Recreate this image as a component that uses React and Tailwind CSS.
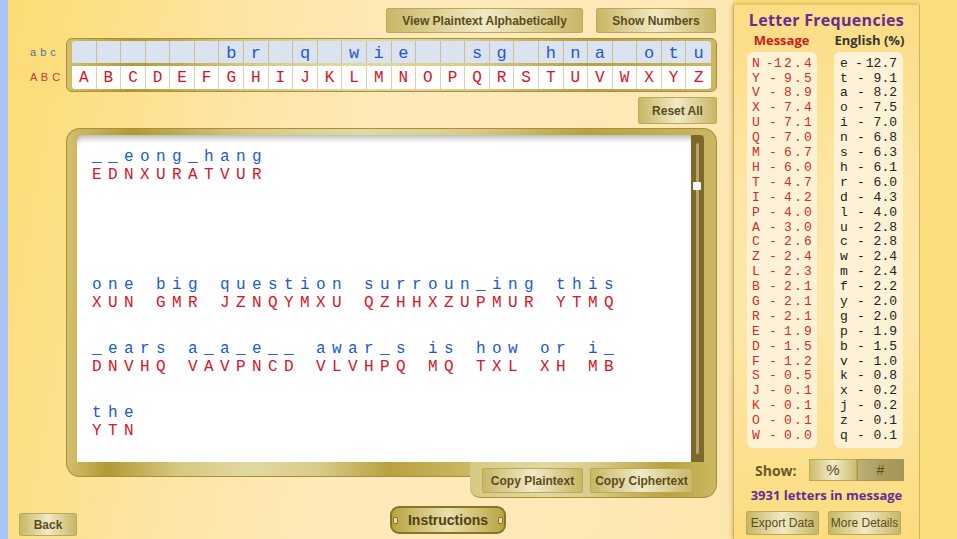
const KEY = { G: 'b', H: 'r', J: 'q', L: 'w', M: 'i', N: 'e', Q: 's', R: 'g', T: 'h', U: 'n', V: 'a', X: 'o', Y: 't', Z: 'u' };
const ALPHA = 'ABCDEFGHIJKLMNOPQRSTUVWXYZ'.split('');

const BLOCKS = [
  ['__eong_hang', 'EDNXURATVUR'],
  ['', ''],
  ['one big question surroun_ing this', 'XUN GMR JZNQYMXU QZHHXZUPMUR YTMQ'],
  ['_ears a_a_e__ awar_s is how or i_', 'DNVHQ VAVPNCD VLVHPQ MQ TXL XH MB'],
  ['the', 'YTN'],
];

const MSG = [
  ['N', '12.4'], ['Y', '9.5'], ['V', '8.9'], ['X', '7.4'], ['U', '7.1'], ['Q', '7.0'], ['M', '6.7'],
  ['H', '6.0'], ['T', '4.7'], ['I', '4.2'], ['P', '4.0'], ['A', '3.0'], ['C', '2.6'], ['Z', '2.4'],
  ['L', '2.3'], ['B', '2.1'], ['G', '2.1'], ['R', '2.1'], ['E', '1.9'], ['D', '1.5'], ['F', '1.2'],
  ['S', '0.5'], ['J', '0.1'], ['K', '0.1'], ['O', '0.1'], ['W', '0.0'],
];

const ENG = [
  ['e', '12.7'], ['t', '9.1'], ['a', '8.2'], ['o', '7.5'], ['i', '7.0'], ['n', '6.8'], ['s', '6.3'],
  ['h', '6.1'], ['r', '6.0'], ['d', '4.3'], ['l', '4.0'], ['u', '2.8'], ['c', '2.8'], ['w', '2.4'],
  ['m', '2.4'], ['f', '2.2'], ['y', '2.0'], ['g', '2.0'], ['p', '1.9'], ['b', '1.5'], ['v', '1.0'],
  ['k', '0.8'], ['x', '0.2'], ['j', '0.2'], ['z', '0.1'], ['q', '0.1'],
];

const btn =
  'flex items-center justify-center border border-[#bca955] rounded-[2px] bg-[linear-gradient(90deg,#c8b766,#f0eac6_50%,#c8b766)] text-[#5b4c1d] text-[12px] font-["Liberation_Sans",Arial,sans-serif]';

const gold =
  'bg-[linear-gradient(90deg,#d2bf6c,#b19a34_10%,#d6c982_28%,#e2d9a2_45%,#d9cc8a_62%,#b9a13e_80%,#cdb862_100%)]';

function FreqList({ rows, color, tracking, letterW, dashW }) {
  return (
    <div className="rounded-[6px] bg-[#fef2d6] px-[5px] py-[4px] h-[396px]">
      {rows.map(([l, v]) => (
        <div key={l} className={`flex items-center h-[14.9px] text-[13px] font-["Liberation_Mono",monospace] ${color}`}>
          <span className={letterW}>{l}</span>
          <span className={dashW}>-</span>
          <span className={`flex-1 text-right ${tracking}`}>{v}</span>
        </div>
      ))}
    </div>
  );
}

export default function App() {
  return (
    <div className="w-[957px] h-[539px] overflow-hidden flex bg-[#fcdd7a] font-['Liberation_Sans',Arial,sans-serif]">
      <div className="w-[8px] bg-[#a9c3f6] shrink-0" />

      {/* main area */}
      <div className="w-[725px] shrink-0 flex flex-col pt-[8px] pl-[22px] pr-[16px] bg-[linear-gradient(100deg,#fcdc72_0%,#fde4a2_28%,#fee9bb_50%,#fee8b6_80%,#fde6ae_100%)]">
        <div className="flex justify-end gap-[13px] pr-[1px]">
          <div className={`${btn} font-bold w-[197px] h-[25px]`}>View Plaintext Alphabetically</div>
          <div className={`${btn} font-bold w-[120px] h-[25px]`}>Show Numbers</div>
        </div>

        {/* key table */}
        <div className="flex mt-[5px]">
          <div className="w-[36px] flex flex-col pt-[2px] text-[11px] tracking-[0.5px] leading-[25px] whitespace-pre">
            <span className="text-[#5a6b9c]">a b c</span>
            <span className="text-[#d23434]">A B C</span>
          </div>
          <div className={`w-[651px] h-[54px] rounded-[6px] border border-[#a88f3c] ${gold} px-[5px] py-[2px] flex flex-col`}>
            <div className="grid grid-cols-[repeat(26,minmax(0,1fr))] h-[22px] bg-[#dbe2f0] rounded-t-[3px] overflow-hidden">
              {ALPHA.map((c) => (
                <div key={c} className="border-r border-[#cdbf8e] last:border-r-0 flex items-center justify-center text-[17px] text-[#2457cc] font-['Liberation_Mono',monospace]">
                  {KEY[c] || ''}
                </div>
              ))}
            </div>
            <div className="h-[3px]" />
            <div className="grid grid-cols-[repeat(26,minmax(0,1fr))] h-[23px] bg-white rounded-b-[3px] overflow-hidden">
              {ALPHA.map((c) => (
                <div key={c} className="border-r border-[#dcd2a8] last:border-r-0 flex items-center justify-center text-[16px] text-[#d0152a] font-['Liberation_Mono',monospace]">
                  {c}
                </div>
              ))}
            </div>
          </div>
        </div>

        <div className="flex justify-end mt-[5px]">
          <div className={`${btn} font-bold w-[79px] h-[27px]`}>Reset All</div>
        </div>

        {/* text panel */}
        <div className="ml-[36px] w-[651px] mt-[4px] flex flex-col">
          <div className={`h-[334px] rounded-t-[14px] border border-b-0 border-[#a88f3c] ${gold} pt-[6px] pl-[10px] flex`}>
            <div className="flex-1 bg-white rounded-tl-[6px] shadow-[inset_0_7px_6px_-4px_rgba(0,0,0,0.3)] pt-[13px] pl-[15px] overflow-hidden">
              {BLOCKS.map(([p, c], i) => (
                <div key={i} className="h-[64px] text-[16px] leading-[18px] tracking-[6.4px] whitespace-pre font-['Liberation_Mono',monospace]">
                  <div className="text-[#2358d0]">{p}</div>
                  <div className="text-[#d4162a]">{c}</div>
                </div>
              ))}
            </div>
            <div className="w-[13px] bg-[#7c6829] rounded-tr-[4px] relative flex justify-center py-[8px]">
              <div className="w-[3px] h-full bg-[#b7a56a] rounded-full" />
              <div className="absolute top-[47px] left-[2px] w-[8px] h-[8px] bg-white rounded-[1px]" />
            </div>
            <div className="w-[12px]" />
          </div>
          <div className="flex">
            <div className={`flex-1 h-[15px] rounded-bl-[14px] border border-t-0 border-r-0 border-[#a88f3c] ${gold}`} />
            <div className="w-[247px] h-[36px] rounded-br-[14px] rounded-bl-[10px] border border-t-0 border-l-0 border-[#a88f3c] bg-[linear-gradient(90deg,#d6c982,#e2d9a2_30%,#d9cc8a_50%,#b9a13e_80%,#cdb862_100%)] flex items-start pt-[6px] pl-[12px] gap-[7px]">
              <div className={`${btn} font-bold w-[101px] h-[25px]`}>Copy Plaintext</div>
              <div className={`${btn} font-bold w-[103px] h-[25px]`}>Copy Ciphertext</div>
            </div>
          </div>
        </div>

        {/* bottom row */}
        <div className="flex items-start mt-[8px] -ml-[11px]">
          <div className={`${btn} font-bold w-[58px] h-[23px] mt-[7px]`}>Back</div>
          <div className="ml-[313px] relative w-[116px] h-[28px] rounded-[9px] border-2 border-[#8a7426] bg-[linear-gradient(90deg,#b9a340,#e9e0ac_50%,#b9a340)] flex items-center justify-center text-[14px] font-bold text-[#4f4216]">
            Instructions
            <span className="absolute left-[1px] top-[9px] w-[5px] h-[7px] border border-[#8a7426] bg-[#e6dca6] rounded-[1px]" />
            <span className="absolute right-[1px] top-[9px] w-[5px] h-[7px] border border-[#8a7426] bg-[#e6dca6] rounded-[1px]" />
          </div>
        </div>
      </div>

      {/* right panel */}
      <div className="w-[187px] shrink-0 mt-[5px] h-[534px] border-l border-r border-[#d2b262] shadow-[0_0_5px_rgba(120,90,20,0.45)] bg-[linear-gradient(180deg,#fcdd84,#fde6a4_35%,#fde7a8_60%,#fde08e_85%,#fcdc7e)] px-[13px] flex flex-col">
        <div className="-mx-[12px] whitespace-nowrap text-center text-[16px] font-bold text-[#6a2a92] tracking-[0.3px] leading-[20px] pt-[5px] font-['Open_Sans',sans-serif]">
          Letter Frequencies
        </div>
        <div className="flex mt-[3px] text-[13px] font-bold leading-[14px] whitespace-nowrap font-['Open_Sans',sans-serif]">
          <div className="w-[70px] text-center text-[#cc1b1b]">Message</div>
          <div className="w-[17px]" />
          <div className="w-[74px] text-center text-[#383530]">English (%)</div>
        </div>
        <div className="flex gap-[17px] mt-[5px]">
          <div className="w-[70px]">
            <FreqList rows={MSG} color="text-[#d32b2b]" tracking="tracking-[2.2px] -mr-[2px]" letterW="w-[17px]" dashW="w-[10px]" />
          </div>
          <div className="w-[69px]">
            <FreqList rows={ENG} color="text-[#222]" tracking="pr-[1px]" letterW="w-[18px] pl-[1px]" dashW="w-[12px]" />
          </div>
        </div>
        <div className="flex items-center mt-[11px]">
          <div className="w-[62px] pl-[8px] text-[14px] font-bold text-[#6b5a28] font-['Open_Sans',sans-serif]">Show:</div>
          <div className="w-[48px] h-[22px] border border-[#bca955] bg-[linear-gradient(90deg,#cdbd70,#f2ecc8_50%,#cdbd70)] flex items-center justify-center text-[15px] text-[#5b4c1d]">%</div>
          <div className="w-[47px] h-[22px] border border-[#a69650] bg-[linear-gradient(90deg,#bcb07a,#a99c5c_60%,#a39658)] flex items-center justify-center text-[14px] text-[#5b4c1d]">#</div>
        </div>
        <div className="mt-[6px] whitespace-nowrap text-center text-[13px] font-bold text-[#6a2a92] leading-[16px] font-['Open_Sans',sans-serif]">
          3931 letters in message
        </div>
        <div className="flex gap-[9px] mt-[8px] -ml-[1px]">
          <div className={`${btn} w-[73px] h-[24px]`}>Export Data</div>
          <div className={`${btn} w-[73px] h-[24px]`}>More Details</div>
        </div>
      </div>

      <div className="flex-1 bg-[#fcdf7c]" />
    </div>
  );
}
